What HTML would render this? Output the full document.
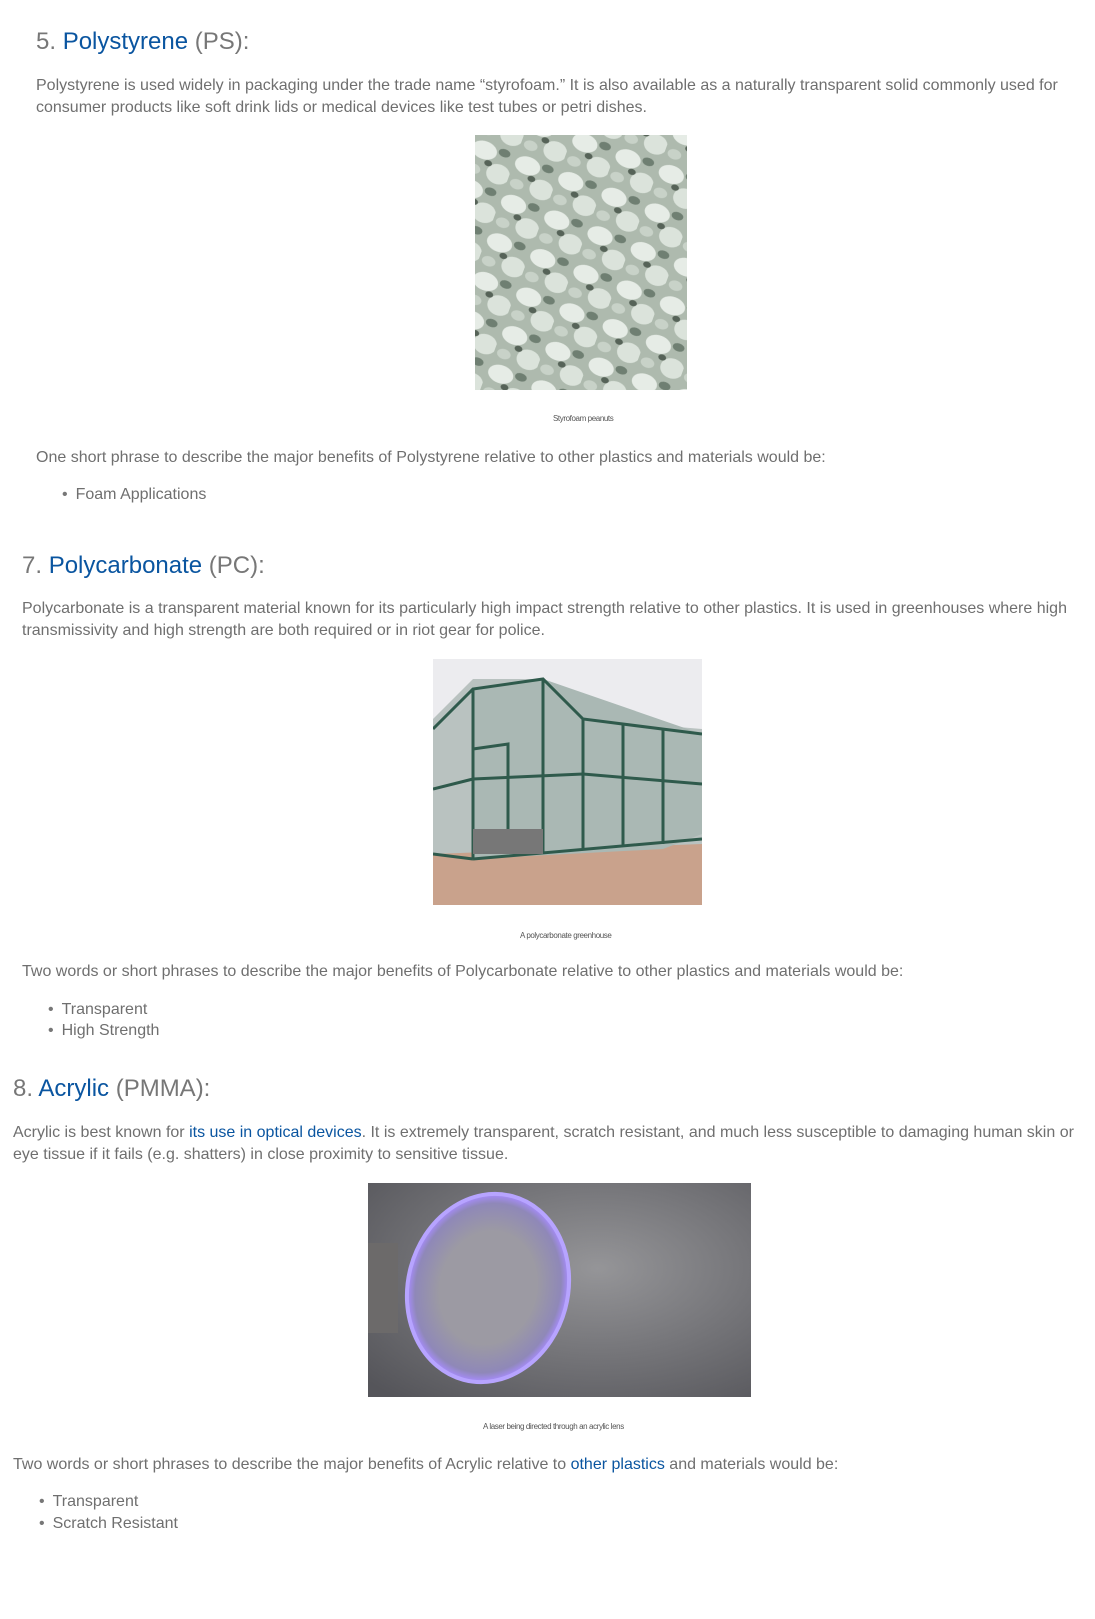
<!DOCTYPE html>
<html><head><meta charset="utf-8"><style>
body{margin:0;width:1095px;height:1619px;background:#fff;position:relative;font-family:"Liberation Sans",Arial,sans-serif;color:#6f6f6f;overflow:hidden}
.a{position:absolute;white-space:nowrap}
h2{position:absolute;margin:0;font-weight:normal;font-size:24px;line-height:30px;color:#777;white-space:nowrap}
a,.b{color:#0a55a0;text-decoration:none}
.p{font-size:16px;line-height:21.5px}
.cap{font-size:8px;color:#555;letter-spacing:-0.4px}
.li{font-size:16px;line-height:21.5px}
.li:before{content:"•";margin-right:8px;color:#777}
</style></head><body>
<h2 style="left:36px;top:27px">5. <span class="b">Polystyrene</span> (PS):</h2>
<div class="a p" style="left:36px;top:75px">Polystyrene is used widely in packaging under the trade name “styrofoam.” It is also available as a naturally transparent solid commonly used for<br>consumer products like soft drink lids or medical devices like test tubes or petri dishes.</div>
<svg class="a" style="left:475px;top:135px" width="212" height="255">
<defs><pattern id="pn" width="46" height="41" patternUnits="userSpaceOnUse" patternTransform="rotate(20)"><rect width="46" height="41" fill="#aebaae"/><ellipse cx="14" cy="11" rx="13" ry="9" fill="#e6ece6"/><ellipse cx="35" cy="29" rx="12" ry="10" fill="#dbe3db"/><ellipse cx="10" cy="32" rx="7" ry="5" fill="#c8d2c8"/><ellipse cx="34" cy="7" rx="6" ry="4" fill="#6f7f72"/><ellipse cx="22" cy="22" rx="4" ry="3" fill="#566358"/></pattern></defs>
<rect width="212" height="255" fill="url(#pn)"/></svg>
<div class="a cap" style="left:553px;top:414px">Styrofoam peanuts</div>
<div class="a p" style="left:36px;top:447px">One short phrase to describe the major benefits of Polystyrene relative to other plastics and materials would be:</div>
<div class="a li" style="left:62px;top:484px">Foam Applications</div>

<h2 style="left:22px;top:551px">7. <span class="b">Polycarbonate</span> (PC):</h2>
<div class="a p" style="left:22px;top:598px">Polycarbonate is a transparent material known for its particularly high impact strength relative to other plastics. It is used in greenhouses where high<br>transmissivity and high strength are both required or in riot gear for police.</div>
<svg class="a" style="left:433px;top:659px" width="269" height="246">
<rect width="269" height="246" fill="#ececef"/>
<rect y="185" width="269" height="61" fill="#c9a28c"/>
<polygon points="0,60 40,20 110,20 150,60 269,70 269,185 0,195" fill="#b9c2c0"/>
<polygon points="40,60 40,200 230,190 269,175 269,75 110,20 40,30" fill="#aab8b4"/>
<g stroke="#2f5a4c" stroke-width="3" fill="none"><path d="M0 70L40 30 110 20 150 60 269 75"/><path d="M40 30V200M110 20V195M150 60V190M190 65V188M230 70V185M40 200L269 180M0 195L40 200M75 190V85L40 90"/><path d="M0 130L40 120M40 120L150 115 269 125"/></g>
<rect x="40" y="170" width="70" height="25" fill="#777"/>
</svg>
<div class="a cap" style="left:520px;top:931px">A polycarbonate greenhouse</div>
<div class="a p" style="left:22px;top:961px">Two words or short phrases to describe the major benefits of Polycarbonate relative to other plastics and materials would be:</div>
<div class="a li" style="left:48px;top:999px">Transparent</div>
<div class="a li" style="left:48px;top:1020px">High Strength</div>

<h2 style="left:13px;top:1074px">8. <span class="b">Acrylic</span> (PMMA):</h2>
<div class="a p" style="left:13px;top:1122px">Acrylic is best known for <a>its use in optical devices</a>. It is extremely transparent, scratch resistant, and much less susceptible to damaging human skin or<br>eye tissue if it fails (e.g. shatters) in close proximity to sensitive tissue.</div>
<svg class="a" style="left:368px;top:1183px" width="383" height="214">
<defs><radialGradient id="bg" cx="0.6" cy="0.4" r="0.8"><stop offset="0" stop-color="#959598"/><stop offset="1" stop-color="#55555a"/></radialGradient>
<radialGradient id="ln" cx="0.5" cy="0.5" r="0.5"><stop offset="0.6" stop-color="#9c9aa3"/><stop offset="0.9" stop-color="#8f88b8"/><stop offset="1" stop-color="#a88cff"/></radialGradient></defs>
<rect width="383" height="214" fill="url(#bg)"/>
<ellipse cx="120" cy="105" rx="80" ry="95" fill="url(#ln)" stroke="#b7a4ff" stroke-width="4" transform="rotate(15 120 105)"/>
<rect x="0" y="60" width="30" height="90" fill="#6c6a6a"/>
</svg>
<div class="a cap" style="left:483px;top:1422px">A laser being directed through an acrylic lens</div>
<div class="a p" style="left:13px;top:1454px">Two words or short phrases to describe the major benefits of Acrylic relative to <a>other plastics</a> and materials would be:</div>
<div class="a li" style="left:39px;top:1491px">Transparent</div>
<div class="a li" style="left:39px;top:1513px">Scratch Resistant</div>
</body></html>
